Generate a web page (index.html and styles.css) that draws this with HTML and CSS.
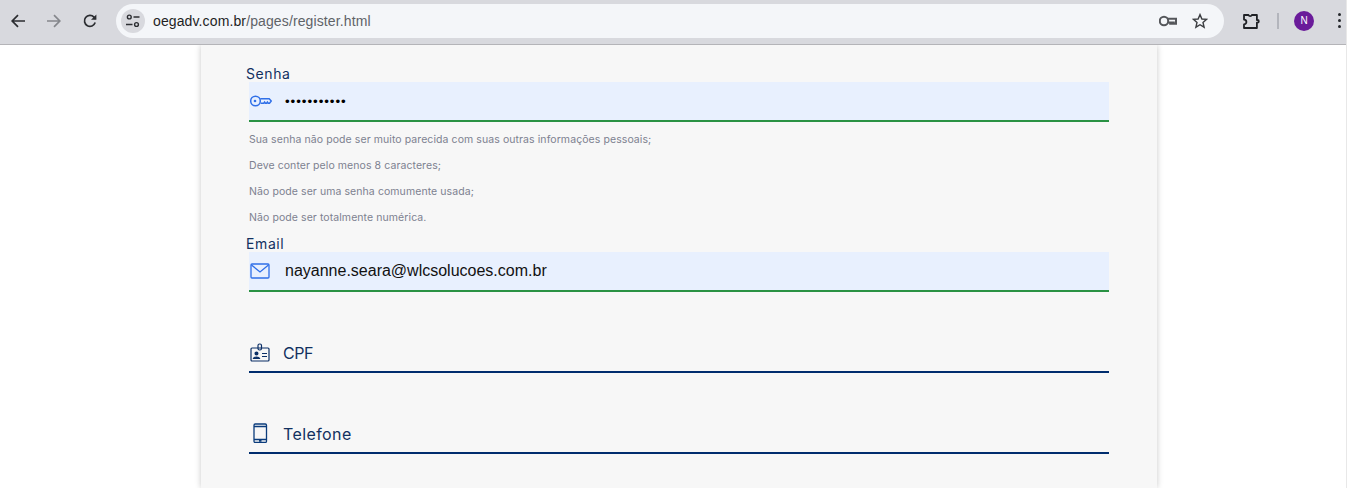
FILE: index.html
```html
<!DOCTYPE html>
<html lang="pt-BR">
<head>
<meta charset="utf-8">
<title>Cadastro</title>
<link rel="stylesheet" href="styles.css">
</head>
<body>
<header class="toolbar">
  <button class="tool">
    <svg width="16" height="16" viewBox="0 0 16 16"><path d="M15 8H2.500M8 2.200 2.200 8 8 13.800" fill="none" stroke="#2b2d31" stroke-width="1.700"/></svg>
  </button>
  <button class="tool">
    <svg width="16" height="16" viewBox="0 0 16 16"><path d="M1 8h12.500M8 2.200 13.800 8 8 13.800" fill="none" stroke="#85878c" stroke-width="1.700"/></svg>
  </button>
  <button class="tool">
    <svg width="16" height="16" viewBox="0 0 16 16"><path d="M13.200 9.600A5.500 5.500 0 1 1 12 4.100L13.600 5.800" fill="none" stroke="#2b2d31" stroke-width="1.700"/><path d="M14.400 1.400v5.400H9z" fill="#2b2d31"/></svg>
  </button>
  <div class="omnibox">
    <span class="site-chip">
      <svg width="16" height="16" viewBox="0 0 16 16" fill="none" stroke="#2b2d31" stroke-width="1.400"><circle cx="4.300" cy="4" r="1.900"/><path d="M8.500 4h6M1 11.500h6.500"/><circle cx="11.500" cy="11.500" r="1.900"/></svg>
    </span>
    <span class="url"><span class="host">oegadv.com.br</span>/pages/register.html</span>
    <svg class="omni-key" width="18" height="12" viewBox="0 0 18 12" fill="none" stroke="#55575b" stroke-width="2"><circle cx="5" cy="6" r="4.200"/><path d="M9 3.800h8v5h-2.200V7.400h-1.600v1.400h-2V7.600H9"/></svg>
    <svg class="omni-star" width="16" height="16" viewBox="0 0 16 16"><path d="M8 1.600 9.900 6l4.700.4-3.600 3.100 1.100 4.700L8 11.700l-4.100 2.500L5 9.500 1.400 6.400 6.100 6z" fill="none" stroke="#3c3e42" stroke-width="1.400"/></svg>
  </div>
  <button class="tool ext">
    <svg width="18" height="18" viewBox="0 0 18 18"><path d="M2 3h4.500a1.800 1.800 0 0 0 3.400 0h5v5h.6a1.300 1.300 0 0 1 0 2.600h-.6V16H2v-3.600a2.400 2.400 0 0 0 0-4.800z" fill="none" stroke="#1f2125" stroke-width="1.800" stroke-linejoin="round"/></svg>
  </button>
  <span class="divider"></span>
  <span class="avatar">N</span>
  <span class="dots"><i></i><i></i><i></i></span>
</header>
<main class="page">
  <section class="card">
    <label class="label">Senha</label>
    <div class="input filled">
      <svg class="field-icon" width="22" height="12" viewBox="0 0 22 12" fill="none" stroke="#2f6fe8" stroke-width="1.500"><circle cx="5.500" cy="6" r="4.800"/><circle cx="5" cy="6" r="1.300" fill="#2f6fe8" stroke="none"/><path d="M10.300 3.800h8.900l2.100 2.200-1.800 2.200h-1.300l-.8-1.100-.8 1.100h-1.200l-.8-1.100-.8 1.100h-3.200"/></svg>
      <span class="password">•••••••••••</span>
    </div>
    <ul class="hints">
      <li>Sua senha não pode ser muito parecida com suas outras informações pessoais;</li>
      <li>Deve conter pelo menos 8 caracteres;</li>
      <li>Não pode ser uma senha comumente usada;</li>
      <li>Não pode ser totalmente numérica.</li>
    </ul>
    <label class="label email-label">Email</label>
    <div class="input filled">
      <svg class="field-icon" width="20" height="16" viewBox="0 0 20 16" fill="none" stroke="#2f6fe8" stroke-width="1.300"><rect x="1" y="1" width="18" height="14" rx="1"/><path d="M1.500 2 10 9l8.500-7"/></svg>
      <span class="value">nayanne.seara@wlcsolucoes.com.br</span>
    </div>
    <div class="input empty">
      <svg class="field-icon" width="20" height="19" viewBox="0 0 20 19" fill="none" stroke="#0b2f66" stroke-width="1.200"><rect x="1" y="5" width="18" height="13" rx="1"/><rect x="8" y="1" width="3.500" height="6" rx="1.500"/><circle cx="6.500" cy="10.500" r="1.400" fill="#0b2f66"/><path d="M3.500 15.500c.5-2 5.500-2 6 0zM12 10.500h5M12 13.500h5" fill="#0b2f66"/></svg>
      <span class="placeholder short">CPF</span>
    </div>
    <div class="input empty">
      <svg class="field-icon" width="20" height="20" viewBox="0 0 20 20" fill="none" stroke="#0b3c7c" stroke-width="1.300"><rect x="4" y="1" width="12.500" height="18.500" rx="1.200"/><path d="M4 3.500h12.500M4 16.500h12.500M9 18h2.500"/></svg>
      <span class="placeholder">Telefone</span>
    </div>
  </section>
</main>
</body>
</html>
```
FILE: styles.css
```css
* { box-sizing: border-box; }
html, body { margin: 0; height: 488px; overflow: hidden; background: #fff; }
body { font-family: "Inter", "Open Sans", sans-serif; border-right: 1px solid #e8e8e8; }

.toolbar {
  display: flex;
  align-items: center;
  height: 45px;
  padding: 0 0 3px 0;
  background: #d8d9de;
  border-bottom: 1px solid #b4b4b8;
  width: 1347px;
}
.tool {
  width: 36px;
  height: 36px;
  border: 0;
  padding: 0;
  background: none;
  display: flex;
  align-items: center;
  justify-content: center;
}
.omnibox {
  display: flex;
  align-items: center;
  width: 1108px;
  height: 34px;
  margin-left: 8px;
  padding: 0 16px 0 5px;
  border-radius: 17px;
  background: #f4f6f9;
}
.site-chip {
  width: 24px;
  height: 24px;
  border-radius: 50%;
  background: #d8d9de;
  display: flex;
  align-items: center;
  justify-content: center;
}
.url {
  margin-left: 8px;
  flex: 1;
  font: 14px "Liberation Sans", Arial, sans-serif;
  color: #5f6368;
  letter-spacing: .12px;
}
.host { color: #1f1f1f; }
.omni-key { margin-right: 15px; }
.ext { margin-left: 9px; }
.divider { width: 2px; height: 16px; margin-left: 8px; background: #b3b5bc; }
.avatar {
  width: 20px;
  height: 20px;
  margin-left: 15px;
  border-radius: 50%;
  background: #6a1b9a;
  color: #fff;
  font: 10px/20px "Liberation Sans", Arial, sans-serif;
  text-align: center;
}
.dots { display: flex; flex-direction: column; gap: 3px; margin-left: 24px; }
.dots i { width: 3px; height: 3px; border-radius: 50%; background: #26282c; }

.page { height: 443px; padding-left: 201px; overflow: hidden; }
.card {
  width: 956px;
  height: 443px;
  padding: 20px 48px 0 48px;
  background: #f7f7f7;
  box-shadow: 0 0 6px rgba(0, 0, 0, .22);
}
.label {
  display: block;
  height: 17px;
  margin-left: -3px;
  font-size: 14px;
  line-height: 17px;
  color: #12305f;
  letter-spacing: .6px;
}
.email-label { margin-top: 4px; }
.input {
  display: flex;
  align-items: center;
  width: 860px;
  height: 40px;
  border-bottom: 2px solid #002d6e;
}
.input + .input { margin-top: 41px; }
.input.filled { background: #e8f0fe; border-bottom-color: #2a9244; }
.field-icon { flex: none; margin-left: 1px; }
.password {
  margin-left: 13px;
  font: 13.3px "Liberation Sans", Arial, sans-serif;
  letter-spacing: .95px;
  color: #000;
}
.value {
  margin-left: 15px;
  font: 16px "Liberation Sans", Arial, sans-serif;
  color: #111;
}
.hints {
  list-style: none;
  margin: 5px 0 0;
  padding: 0;
  font-size: 10.5px;
  letter-spacing: .08px;
  color: #7d8190;
}
.hints li { height: 26px; line-height: 26px; }
.placeholder { margin-left: 13px; padding-top: 2px; font-size: 16px; letter-spacing: .4px; color: #12305f; }
.placeholder.short { letter-spacing: -.4px; }
```
